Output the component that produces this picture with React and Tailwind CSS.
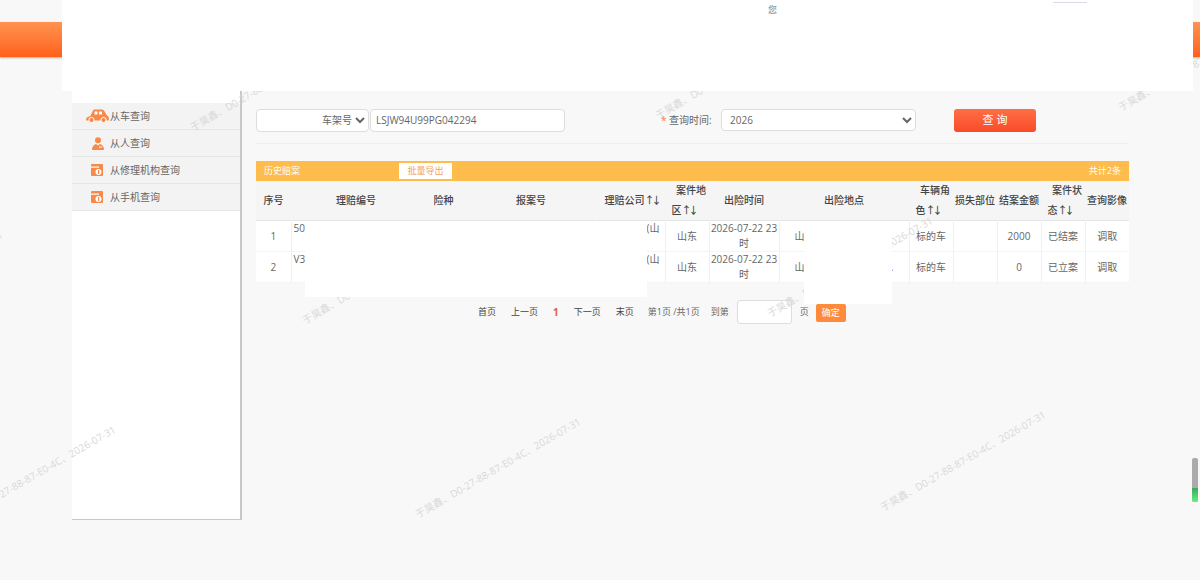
import React from 'react';

const marks = [
  'left-[194px] top-[121px]',
  'left-[659px] top-[109px]',
  'left-[1122px] top-[101px]',
  'left-[-159px] top-[321px]',
  'left-[306px] top-[314px]',
  'left-[771px] top-[307px]',
  'left-[-46px] top-[516px]',
  'left-[419px] top-[508px]',
  'left-[884px] top-[501px]',
];

const rows = [
  { no: 1, id: '50', amount: '2000', status: '已结案', more: '' },
  { no: 2, id: 'V3', amount: '0', status: '已立案', more: '..' },
];

const CarIcon = () => (
  <svg width="23" height="14" viewBox="0 0 23 14" className="shrink-0">
    <path fill="#f58a4b" d="M0 11c0-2 1-3.2 4.2-3.8L6.6 2.2C7.2 1 8 .6 9.5.6h6c1.4 0 2.2.5 2.9 1.6l2.6 4.3c1.300.6 2 1.800 2 3.500 0 1.100-.5 1.600-1.500 1.600H1C.3 11.600 0 11.400 0 11z" />
    <rect x="8.500" y="2.500" width="3" height="3" rx=".5" fill="#fff" />
    <rect x="13" y="2.500" width="3" height="3" rx=".5" fill="#fff" />
    <circle cx="5.500" cy="11" r="2.600" fill="#f58a4b" stroke="#fff" strokeWidth="1" />
    <circle cx="17.500" cy="11" r="2.600" fill="#f58a4b" stroke="#fff" strokeWidth="1" />
  </svg>
);

const PersonIcon = () => (
  <svg width="12" height="13" viewBox="0 0 12 13" className="shrink-0">
    <circle cx="6" cy="3.200" r="3" fill="#f58a4b" />
    <path fill="#f58a4b" d="M0 13c0-3.500 1.800-5.500 4-6l2 1.500L8 7c2.300.5 4 2.500 4 6z" />
    <path stroke="#fff" strokeWidth="1" fill="none" d="M7 10h3" />
  </svg>
);

const ShopIcon = () => (
  <svg width="12" height="12" viewBox="0 0 12 12" className="shrink-0">
    <rect width="12" height="12" rx="1" fill="#f58a4b" />
    <rect x="0" y="2.500" width="8" height="1.200" fill="#fff" />
    <circle cx="7.500" cy="8" r="3" fill="#fff" />
    <rect x="7" y="6" width="1.200" height="4" fill="#f58a4b" />
  </svg>
);

const menu = [
  { label: '从车查询', icon: <CarIcon />, box: 'pl-[14px]' },
  { label: '从人查询', icon: <PersonIcon />, box: 'pl-[20px]' },
  { label: '从修理机构查询', icon: <ShopIcon />, box: 'pl-[19px]' },
  { label: '从手机查询', icon: <ShopIcon />, box: 'pl-[19px]' },
];

const Arrows = () => <span className="tracking-[-3px] pr-[3px]">↑↓</span>;

const Head = ({ children }) => (
  <th className="font-medium text-[#444] text-center align-middle p-0 leading-[19.5px]">{children}</th>
);

const TwoLine = ({ a, b }) => (
  <th className="font-medium text-[#444] text-center align-middle p-0 leading-[19.5px]">
    <span className="block pl-[8px] whitespace-nowrap">{a}</span>
    <span className="block pr-[4px] whitespace-nowrap">{b}<Arrows /></span>
  </th>
);

const Cell = ({ children, className = '' }) => (
  <td className={`border-r border-[#f0f0f0] p-0 text-center align-middle text-[#666] ${className}`}>{children}</td>
);

const App = () => {
  return (
    <div className="relative w-full h-[580px] overflow-hidden bg-[#f8f8f8] text-[10px] font-['Open_Sans','Noto_Sans_CJK_SC',sans-serif]">
      {/* top bar */}
      <div className="mt-[22px] h-[35px] bg-gradient-to-b from-[#ff934f] to-[#ff5f17] shadow-[0_1px_2px_rgba(0,0,0,0.3)]"></div>

      <div className="flex mt-[8px] ml-[72px]">
        {/* left menu */}
        <div className="w-[170px] h-[455px] shrink-0 bg-white pt-[38px] border-r-2 border-b border-[#c8c8c8]">
          {menu.map((m) => (
            <div key={m.label} className={`h-[27px] flex items-center bg-[#f3f3f3] border-b border-[#e6e6e6] text-[#666] ${m.box}`}>
              <span className="flex items-center justify-center">{m.icon}</span>
              <span className={m.label === '从车查询' ? 'ml-[1px]' : m.label === '从人查询' ? 'ml-[6px]' : 'ml-[7px]'}>{m.label}</span>
            </div>
          ))}
        </div>

        <div className="w-[873px] ml-[14px] shrink-0">
          {/* search */}
          <div className="flex items-center h-[24px] mt-[43px] text-[#666]">
            <select className="w-[113px] h-[23px] bg-white border border-[#ddd] rounded-[4px] text-[10px] text-[#666] [text-align-last:right] pr-0 outline-none">
              <option>车架号</option>
            </select>
            <input
              readOnly
              value="LSJW94U99PG042294"
              className="ml-[1px] w-[195px] h-[23px] bg-white border border-[#ddd] rounded-[4px] px-[5px] text-[10px] text-[#666] outline-none"
            />
            <span className="ml-[96px] w-[60px] whitespace-nowrap">
              <span className="text-[#ff7a45]">* </span>查询时间:
            </span>
            <select className="w-[195px] h-[22px] bg-white border border-[#ddd] rounded-[4px] text-[10px] text-[#666] pl-[4px] outline-none">
              <option>2026</option>
            </select>
            <button className="ml-[38px] w-[82px] h-[23px] rounded-[3px] bg-gradient-to-b from-[#ff6e45] to-[#f84a28] text-white text-[11px]">查 询</button>
          </div>
          <div className="mt-[11px] border-t border-[#eeeeee]"></div>

          {/* history table */}
          <div className="mt-[17px] h-[20px] flex items-center bg-[#fdbc4b] text-white text-[9px] pl-[8px] pr-[8px]">
            <span>历史赔案</span>
            <span className="ml-[99px] w-[53px] h-[16px] bg-white text-[#f5a35c] flex items-center justify-center">批量导出</span>
            <span className="ml-auto">共计2条</span>
          </div>
          <table className="w-[873px] table-fixed border-collapse">
            <colgroup>
              <col className="w-[35px]" />
              <col className="w-[130px]" />
              <col className="w-[45px]" />
              <col className="w-[130px]" />
              <col className="w-[69px]" />
              <col className="w-[44px]" />
              <col className="w-[70px]" />
              <col className="w-[130px]" />
              <col className="w-[44px]" />
              <col className="w-[44px]" />
              <col className="w-[44px]" />
              <col className="w-[44px]" />
              <col className="w-[44px]" />
            </colgroup>
            <thead>
              <tr className="h-[39px] bg-[#f5f5f5] border-b border-[#e4e4e4]">
                <Head>序号</Head>
                <Head>理赔编号</Head>
                <Head>险种</Head>
                <Head>报案号</Head>
                <Head><span className="whitespace-nowrap pl-[5px]">理赔公司<Arrows /></span></Head>
                <TwoLine a="案件地" b="区" />
                <Head>出险时间</Head>
                <Head>出险地点</Head>
                <TwoLine a="车辆角" b="色" />
                <Head><span className="whitespace-nowrap">损失部位</span></Head>
                <Head><span className="whitespace-nowrap">结案金额</span></Head>
                <TwoLine a="案件状" b="态" />
                <Head><span className="whitespace-nowrap">查询影像</span></Head>
              </tr>
            </thead>
            <tbody>
              {rows.map((r) => (
                <tr key={r.no} className="h-[31px] bg-white border-b border-[#f5f5f5]">
                  <Cell>{r.no}</Cell>
                  <Cell className="!text-left !align-top pl-[2px] leading-[15px]">{r.id}</Cell>
                  <Cell></Cell>
                  <Cell></Cell>
                  <Cell className="!text-right !align-top pr-[5px] leading-[15px]">(山</Cell>
                  <Cell>山东</Cell>
                  <Cell className="leading-[15px]">
                    <span className="whitespace-nowrap">2026-07-22 23</span>
                    <br />时
                  </Cell>
                  <Cell className="!text-left pl-[15px] pr-[15px]">
                    <div className="flex justify-between">
                      <span>山</span>
                      <span>{r.more}</span>
                    </div>
                  </Cell>
                  <Cell>标的车</Cell>
                  <Cell></Cell>
                  <Cell>{r.amount}</Cell>
                  <Cell>{r.status}</Cell>
                  <Cell className="border-r-0 text-[#555]">调取</Cell>
                </tr>
              ))}
            </tbody>
          </table>

          {/* pager */}
          <div className="flex items-center h-[24px] mt-[17px] pl-[222px] text-[9px] text-[#666] whitespace-nowrap">
            <span className="text-[#444]">首页</span>
            <span className="ml-[15px] text-[#444]">上一页</span>
            <span className="ml-[15px] text-[10px] text-[#e0603a] font-bold">1</span>
            <span className="ml-[15px] text-[#444]">下一页</span>
            <span className="ml-[15px] text-[#444]">末页</span>
            <span className="ml-[14px]">第1页 /共1页</span>
            <span className="ml-[11px]">到第</span>
            <input readOnly className="ml-[8px] w-[55px] h-[24px] bg-white border border-[#ddd] rounded-[3px] outline-none" />
            <span className="ml-[8px]">页</span>
            <button className="ml-[7px] mt-[2px] w-[30px] h-[18px] rounded-[2px] bg-[#ff8a3a] text-white text-[9px]">确定</button>
          </div>
        </div>
      </div>

      {/* watermark */}
      {marks.map((m) => (
        <div
          key={m}
          className={`absolute ${m} origin-bottom-left -rotate-[30deg] whitespace-nowrap text-[10px] leading-[12px] text-[#d8d8d8] pointer-events-none`}
        >
          于昊鑫、D0-27-88-87-E0-4C、2026-07-31
        </div>
      ))}

      {/* blanked-out parts of the screenshot */}
      <div className="absolute left-[62px] top-0 w-[1131px] h-[91px] bg-white">
        <span className="absolute left-[706px] top-[4px] text-[9px] leading-[12px] text-[#777]">您</span>
        <span className="absolute left-[991px] top-[2px] w-[34px] h-px bg-[#ddd8e4]"></span>
      </div>
      <div className="absolute left-[305px] top-[221px] w-[342px] h-[76px] bg-white"></div>
      <div className="absolute left-[804px] top-[228px] w-[88px] h-[76px] bg-white"></div>

      {/* small meter at the right edge */}
      <div className="absolute left-[1192px] top-[458px] w-[6px] h-[44px] rounded-[2px] bg-[#ababab] overflow-hidden flex flex-col justify-end">
        <div className="h-[14px] bg-gradient-to-b from-[#3ea85c] to-[#63f080]"></div>
      </div>
    </div>
  );
};

export default App;
